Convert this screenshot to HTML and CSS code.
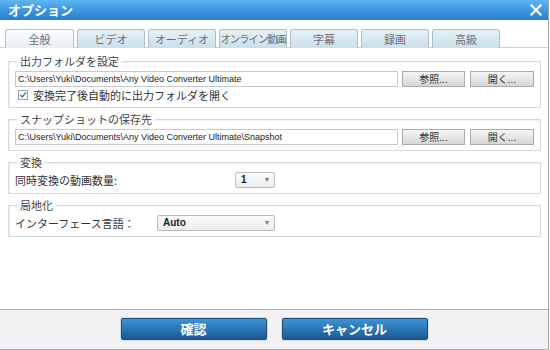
FILE: index.html
```html
<!DOCTYPE html>
<html lang="ja">
<head>
<meta charset="utf-8">
<link rel="stylesheet" href="styles.css">
</head>
<body>
<div class="window">
  <div class="titlebar">
    <span class="title">オプション</span>
    <svg class="close" width="12" height="12" viewBox="0 0 12 12"><path d="M1.5 1.5 L10.5 10.5 M10.5 1.5 L1.5 10.5" stroke="#fff" stroke-width="2.2" stroke-linecap="square"/></svg>
  </div>
  <div class="tabs">
    <div class="tab active">全般</div>
    <div class="tab">ビデオ</div>
    <div class="tab">オーディオ</div>
    <div class="tab tight">オンライン動画</div>
    <div class="tab">字幕</div>
    <div class="tab">録画</div>
    <div class="tab">高級</div>
  </div>
  <div class="content">
    <fieldset class="group">
      <legend>出力フォルダを設定</legend>
      <div class="pathrow">
        <div class="path">C:\Users\Yuki\Documents\Any Video Converter Ultimate</div>
        <div class="btn">参照...</div>
        <div class="btn">開く...</div>
      </div>
      <div class="checkrow">
        <span class="check"><svg width="10" height="10" viewBox="0 0 10 10"><path d="M1.5 5 L4 7.5 L8.8 1.8" fill="none" stroke="#2f7fcf" stroke-width="1.8"/></svg></span>
        <span>変換完了後自動的に出力フォルダを開く</span>
      </div>
    </fieldset>
    <fieldset class="group">
      <legend>スナップショットの保存先</legend>
      <div class="pathrow">
        <div class="path">C:\Users\Yuki\Documents\Any Video Converter Ultimate\Snapshot</div>
        <div class="btn">参照...</div>
        <div class="btn">開く...</div>
      </div>
    </fieldset>
    <fieldset class="group">
      <legend>変換</legend>
      <div class="optrow">
        <span>同時変換の動画数量:</span>
        <div class="select small"><span>1</span><span class="arrow">▾</span></div>
      </div>
    </fieldset>
    <fieldset class="group">
      <legend>局地化</legend>
      <div class="optrow">
        <span>インターフェース言語：</span>
        <div class="select wide"><span>Auto</span><span class="arrow">▾</span></div>
      </div>
    </fieldset>
  </div>
  <div class="footer">
    <div class="bigbtn">確認</div>
    <div class="bigbtn">キャンセル</div>
  </div>
</div>
</body>
</html>
```
FILE: styles.css
```css
* { box-sizing: border-box; }
html, body { margin: 0; padding: 0; background: #fff; }
body {
  font-family: "Noto Sans CJK JP", "Liberation Sans", sans-serif;
  font-size: 11px;
  line-height: 14px;
  color: #333;
}
.window {
  width: 549px;
  height: 350px;
  border-right: 1px solid #9ea4aa;
  display: flex;
  flex-direction: column;
  background: #fff;
}
.titlebar {
  height: 20px;
  flex: none;
  background: linear-gradient(#5bb6f1, #3a92dc 60%, #2b7cc6);
  display: flex;
  align-items: center;
  justify-content: space-between;
  padding: 0 6px 0 8px;
}
.title {
  color: #fff;
  font-size: 13px;
  font-weight: bold;
  line-height: 20px;
}
.close { display: block; }
.tabs {
  display: flex;
  flex: none;
  gap: 3px;
  padding: 9px 0 0 5px;
  border-bottom: 1px solid #c9d3da;
  height: 28px;
}
.tab {
  width: 68px;
  height: 19px;
  border: 1px solid #a9c0cf;
  border-bottom: none;
  border-radius: 3px 3px 0 0;
  background: linear-gradient(#e6f1f7, #c9dfeb);
  color: #707070;
  font-size: 11px;
  line-height: 18px;
  text-align: center;
  white-space: nowrap;
  overflow: hidden;
}
.tab.tight { letter-spacing: -1.2px; font-size: 10.5px; }
.tab.active {
  width: 69px;
  background: linear-gradient(#fbfcfd, #e8eef2);
  border-color: #b3c2cc;
}
.content {
  padding: 6px 7px 0 8px;
  display: flex;
  flex-direction: column;
  gap: 4px;
}
.group {
  margin: 0;
  padding: 2px 6px 5px 6px;
  border: 1px solid #d4dbe1;
  box-shadow: inset 1px 1px 0 #eef2f5;
  min-width: 0;
}
.group legend {
  padding: 0 3px;
  margin-left: 2px;
  line-height: 14px;
  font-size: 11px;
  color: #444;
}
.pathrow {
  display: flex;
  align-items: center;
  gap: 4px;
  height: 17px;
}
.path {
  flex: 1;
  height: 16px;
  border: 1px solid #c6cacf;
  background: #fff;
  font-family: "Liberation Sans", sans-serif;
  font-size: 9px;
  line-height: 14px;
  padding-left: 2px;
  color: #222;
  white-space: nowrap;
  overflow: hidden;
}
.btn {
  width: 63px;
  height: 16px;
  border: 1px solid #a9abae;
  background: linear-gradient(#f7f7f7, #e4e4e4 55%, #d6d6d6);
  font-size: 10px;
  line-height: 14px;
  text-align: center;
  color: #333;
}
.btn + .btn { margin-left: 1px; width: 64px; }
.checkrow {
  display: flex;
  align-items: center;
  gap: 5px;
  height: 14px;
  margin-top: 1px;
  padding-left: 3px;
}
.check {
  width: 10px;
  height: 10px;
  border: 1px solid #9aa4ad;
  background: #fff;
  display: flex;
  align-items: center;
  justify-content: center;
  overflow: visible;
}
.check svg { display: block; }
.optrow {
  width: 260px;
  display: flex;
  justify-content: space-between;
  align-items: center;
  height: 17px;
}
.select {
  height: 16px;
  border: 1px solid #b9bdc1;
  border-radius: 2px;
  background: linear-gradient(#fbfbfb, #ececec);
  display: flex;
  justify-content: space-between;
  align-items: center;
  padding: 0 5px;
  font-family: "Liberation Sans", sans-serif;
  font-weight: bold;
  font-size: 10px;
  color: #222;
}
.select.small { width: 40px; }
.select.wide { width: 118px; }
.arrow { font-size: 8px; color: #777; font-weight: normal; }
.footer {
  margin-top: auto;
  height: 41px;
  flex: none;
  border-top: 1px solid #a9aeb3;
  border-bottom: 1px solid #a9aeb3;
  background: #f2f2f4;
  display: flex;
  justify-content: center;
  align-items: flex-start;
  gap: 15px;
  padding-top: 8px;
}
.bigbtn {
  width: 146px;
  height: 22px;
  border: 1px solid #1f4f77;
  border-radius: 2px;
  background: linear-gradient(#3d93d3, #2a77b6 50%, #1b5a8e);
  box-shadow: 0 0 0 1px #d7dde2;
  color: #fff;
  font-weight: bold;
  font-size: 13px;
  line-height: 20px;
  text-align: center;
}
```
